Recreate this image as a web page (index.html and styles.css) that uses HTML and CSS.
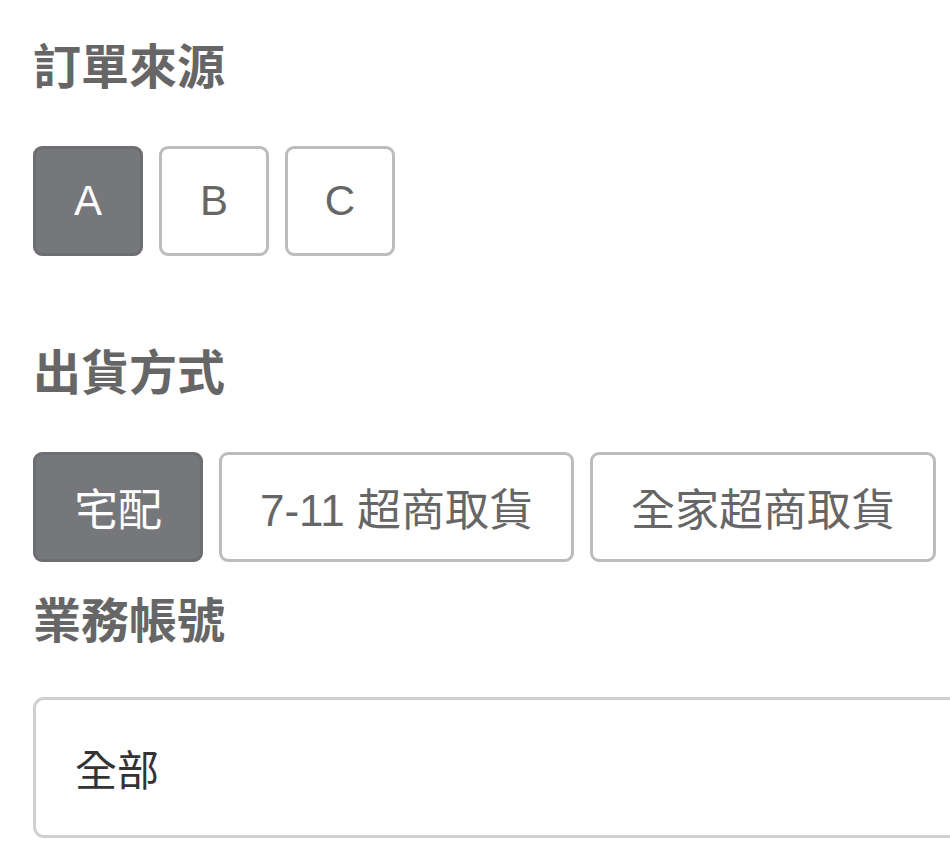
FILE: index.html
```html
<!DOCTYPE html>
<html lang="zh-TW">
<head>
    <meta charset="UTF-8">
    <meta name="viewport" content="width=device-width, initial-scale=1.0">
    <title>篩選</title>
    <link rel="stylesheet" href="styles.css">
</head>
<body>
    <div class="filter-panel">
        <div class="filter-group group-source">
            <h3 class="filter-title">訂單來源</h3>
            <div class="option-row">
                <button class="option square active">A</button>
                <button class="option square">B</button>
                <button class="option square">C</button>
            </div>
        </div>

        <div class="filter-group group-shipping">
            <h3 class="filter-title">出貨方式</h3>
            <div class="option-row">
                <button class="option active">宅配</button>
                <button class="option">7-11 超商取貨</button>
                <button class="option">全家超商取貨</button>
            </div>
        </div>

        <div class="filter-group group-account">
            <h3 class="filter-title">業務帳號</h3>
            <div class="select-box">全部</div>
        </div>
    </div>
</body>
</html>
```

FILE: styles.css
```css
body {
    margin: 0;
    background-color: #fff;
    font-family: "Liberation Sans", "Noto Sans CJK TC", sans-serif;
    overflow: hidden;
}
.filter-panel {
    padding: 40px 0 0 33px;
}
.filter-title {
    margin: 0 0 50px;
    font-size: 48px;
    line-height: 56px;
    font-weight: bold;
    color: #666;
}
.group-source {
    margin-bottom: 90px;
}
.group-shipping {
    margin-bottom: 32px;
}
.group-account .filter-title {
    margin-bottom: 47px;
}
.option-row {
    display: flex;
    gap: 16px;
}
.option {
    box-sizing: border-box;
    height: 110px;
    padding: 0 38px;
    background-color: #fff;
    border: 3px solid #bcbcbe;
    border-radius: 9px;
    font-family: inherit;
    font-size: 44px;
    color: #666;
    white-space: nowrap;
    cursor: pointer;
}
.option.square {
    width: 110px;
    padding: 0;
    font-size: 42px;
}
.option.active {
    background-color: #76777b;
    border-color: #6d6e72;
    color: #fff;
}
.select-box {
    box-sizing: border-box;
    width: 1000px;
    height: 141px;
    padding: 0 39px;
    border: 3px solid #d0d0d0;
    border-radius: 11px;
    display: flex;
    align-items: center;
    font-size: 42px;
    color: #333;
}
```
